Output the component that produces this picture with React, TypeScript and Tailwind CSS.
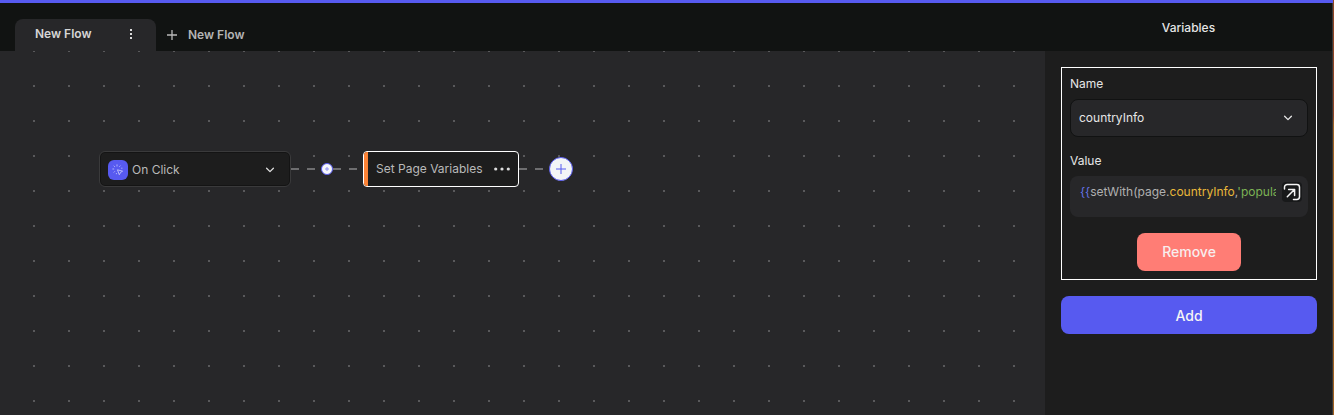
import { useState } from "react";

function CursorClickIcon() {
  return (
    <svg aria-hidden="true" viewBox="0 0 12 12" className="size-3" fill="none" stroke="#b9bbfa" strokeLinecap="round" strokeLinejoin="round">
      <path d="M5 .8v1.3M2 2l.6.6M.8 5h1M2 8.2l.6-.6M4.4 9.8v-.4M8.2 1.9l-.6.6M10 4.2h-.4" strokeWidth=".9" />
      <path d="M5.8 5.9l4.8 1.3-2 1.1-1.1 2.1z" strokeWidth="1" />
    </svg>
  );
}

function ChevronIcon({ className }: { className: string }) {
  return (
    <svg aria-hidden="true" viewBox="0 0 10 10" className={className} fill="none" stroke="currentColor" strokeWidth="1.3" strokeLinecap="round" strokeLinejoin="round">
      <path d="M1.6 3.2 5 6.6l3.4-3.4" />
    </svg>
  );
}

function ExpandIcon() {
  return (
    <svg aria-hidden="true" viewBox="0 0 18 18" className="size-[18px]" fill="none" stroke="#f4f4f4" strokeWidth="1.5" strokeLinecap="round" strokeLinejoin="round">
      <path d="M1.5 6V4.2A2.7 2.7 0 0 1 4.2 1.5h9.6a2.7 2.7 0 0 1 2.7 2.7v9.6a2.7 2.7 0 0 1-2.7 2.7H10.5" />
      <path d="M4.3 13.7l6.9-6.9M5.6 6.4h6v6" />
    </svg>
  );
}

function Connector({ className }: { className: string }) {
  return (
    <svg aria-hidden="true" className={`h-0.5 ${className}`}>
      <line x1="0" y1="1" x2="100%" y2="1" stroke="#6e6e70" strokeWidth="2" strokeDasharray="8 8" />
    </svg>
  );
}

function Tabs() {
  return (
    <div className="flex h-8 min-w-0 flex-1 pl-[15px] text-[12px] leading-4 font-semibold">
      <div className="flex w-[141px] items-center justify-between rounded-t-lg bg-[#272729] pr-5 pb-0.5 pl-5 text-[#d6d6d6]">
        <button type="button">New Flow</button>
        <button type="button" aria-label="Flow options" className="flex h-4 w-2.5 items-center justify-center">
          <svg aria-hidden="true" viewBox="0 0 2 12" className="h-3 w-0.5" fill="#dcdcdc">
            <path d="M0 1h2v2H0zM0 5h2v2H0zM0 9h2v2H0z" />
          </svg>
        </button>
      </div>
      <button type="button" className="flex items-center gap-[11px] pl-[11px] text-[#b4b4b4]">
        <svg aria-hidden="true" viewBox="0 0 10 10" className="size-2.5" stroke="#b9b9b9" strokeWidth="1.3">
          <path d="M0 5h10M5 0v10" />
        </svg>
        New Flow
      </button>
    </div>
  );
}

function Canvas() {
  return (
    <main className="min-w-0 flex-1 overflow-hidden bg-[#272729] bg-[conic-gradient(from_270deg_at_2px_2px,#59595b_90deg,transparent_0)] bg-size-[35px_35px] bg-position-[33px_-1px] pt-[100px] pl-[99px]">
      <div className="flex h-9 items-center">
        <button type="button" className="flex h-9 w-48 shrink-0 items-center rounded-md border border-[#3a3a3b] bg-[#1d1d1d] pt-0.5 pr-[15px] pl-2 text-[12px] text-[#b9b9b9] inset-shadow-[0_0_0_1px_#141414]">
          <span className="mr-1 flex size-5 items-center justify-center rounded-md bg-[#575af0]">
            <CursorClickIcon />
          </span>
          On Click
          <ChevronIcon className="ml-auto size-2.5 text-[#dddddd]" />
        </button>
        <Connector className="w-[30px] shrink-0" />
        <button type="button" aria-label="Insert step" className="flex size-3 shrink-0 items-center justify-center rounded-full border border-[#575af0] bg-[#f5f6fb]">
          <svg aria-hidden="true" viewBox="0 0 4 4" className="size-1" stroke="#8e90f5" strokeWidth="1">
            <path d="M0 2h4M2 0v4" />
          </svg>
        </button>
        <Connector className="w-[30px] shrink-0" />
        <div className="flex h-9 w-[156px] shrink-0 items-center overflow-hidden rounded-sm border border-white bg-[#1d1d1d] text-[12px] text-[#b9b9b9]">
          <span className="h-full w-1 bg-[#fc8336]" />
          <span className="ml-2 whitespace-nowrap">Set Page Variables</span>
          <button type="button" aria-label="Step options" className="mr-2 ml-auto">
            <svg aria-hidden="true" viewBox="0 0 16 4" className="h-1 w-4" fill="#dddddd">
              <circle cx="1.7" cy="2" r="1.6" />
              <circle cx="8" cy="2" r="1.6" />
              <circle cx="14.3" cy="2" r="1.6" />
            </svg>
          </button>
        </div>
        <Connector className="w-[30px] shrink-0" />
        <button type="button" aria-label="Add step" className="flex size-6 shrink-0 items-center justify-center rounded-full border border-[#575af0] bg-[#f3f5f7]">
          <svg aria-hidden="true" viewBox="0 0 10 10" className="size-2.5" stroke="#575af0" strokeWidth="1">
            <path d="M0 5h10M5 0v10" />
          </svg>
        </button>
      </div>
    </main>
  );
}

function ValueField() {
  const [value, setValue] = useState("{{setWith(page.countryInfo,'popula");
  const tokens = value.split(/(\{\{|countryInfo|'[^']*)/).filter(Boolean);
  const colour = (token: string) =>
    token === "{{" ? "text-[#6674e8]" : token === "countryInfo" ? "text-[#e9b83a]" : token.startsWith("'") ? "text-[#7cb255]" : "text-[#b0b0b0]";
  return (
    <div className="flex h-[41px] items-start rounded-lg bg-[#272729] pt-[6px] pr-[6px] pl-2.5">
      <div className="relative h-5 min-w-0 flex-1 overflow-hidden text-[12px] leading-5 whitespace-pre">
        <div aria-hidden="true">
          {tokens.map((token, i) => (
            <span key={i} className={colour(token)}>{token}</span>
          ))}
        </div>
        <input id="variable-value" value={value} onChange={(e) => setValue(e.target.value)} className="absolute inset-0 w-full bg-transparent text-transparent caret-white outline-none" />
      </div>
      <button type="button" aria-label="Open editor" className="ml-1.5 flex size-5 items-center justify-center rounded-sm bg-[#18191a]">
        <ExpandIcon />
      </button>
    </div>
  );
}

function VariablesPanel() {
  return (
    <aside className="w-[287px] shrink-0 bg-[#1d1d1d] pt-4 pr-[15px] pl-4">
      <section className="border border-white p-2 text-[12px] leading-4 text-[#e6e6e6]">
        <label htmlFor="variable-name" className="block">Name</label>
        <div className="relative mt-[7px]">
          <select id="variable-name" className="h-[38px] w-full appearance-none rounded-lg border border-[#111212] bg-[#272729] px-2 text-[12px] text-[#e6e6e6]">
            <option>countryInfo</option>
          </select>
          <ChevronIcon className="pointer-events-none absolute top-3.5 right-[15px] size-2.5 text-[#e6e6e6]" />
        </div>
        <label htmlFor="variable-value" className="mt-4 mb-[7px] block">Value</label>
        <ValueField />
        <button type="button" className="mx-auto mt-4 block h-[38px] w-[104px] rounded-lg bg-[#ff7d75] text-[14px] font-medium text-[#f8eeee]">Remove</button>
      </section>
      <button type="button" className="mt-4 h-[38px] w-full rounded-lg bg-[#575af0] text-[14px] font-medium text-[#f5f5f5]">Add</button>
    </aside>
  );
}

export default function App() {
  return (
    <div className="flex min-h-screen font-['Inter',sans-serif]">
      <div className="flex min-w-0 flex-1 flex-col bg-[#111312]">
        <div className="h-[3px] bg-[#575af0]" />
        <div className="flex flex-1 flex-col border-r border-[#38383a]">
          <header className="flex h-12 items-end">
            <Tabs />
            <h2 className="mb-[15px] w-[287px] text-center text-[12px] leading-4 font-medium text-[#e6e6e6]">Variables</h2>
          </header>
          <div className="flex flex-1">
            <Canvas />
            <VariablesPanel />
          </div>
        </div>
      </div>
      <div className="w-px bg-linear-to-b from-[#8f4423] from-28% to-[#a0611f] to-30%" />
    </div>
  );
}
